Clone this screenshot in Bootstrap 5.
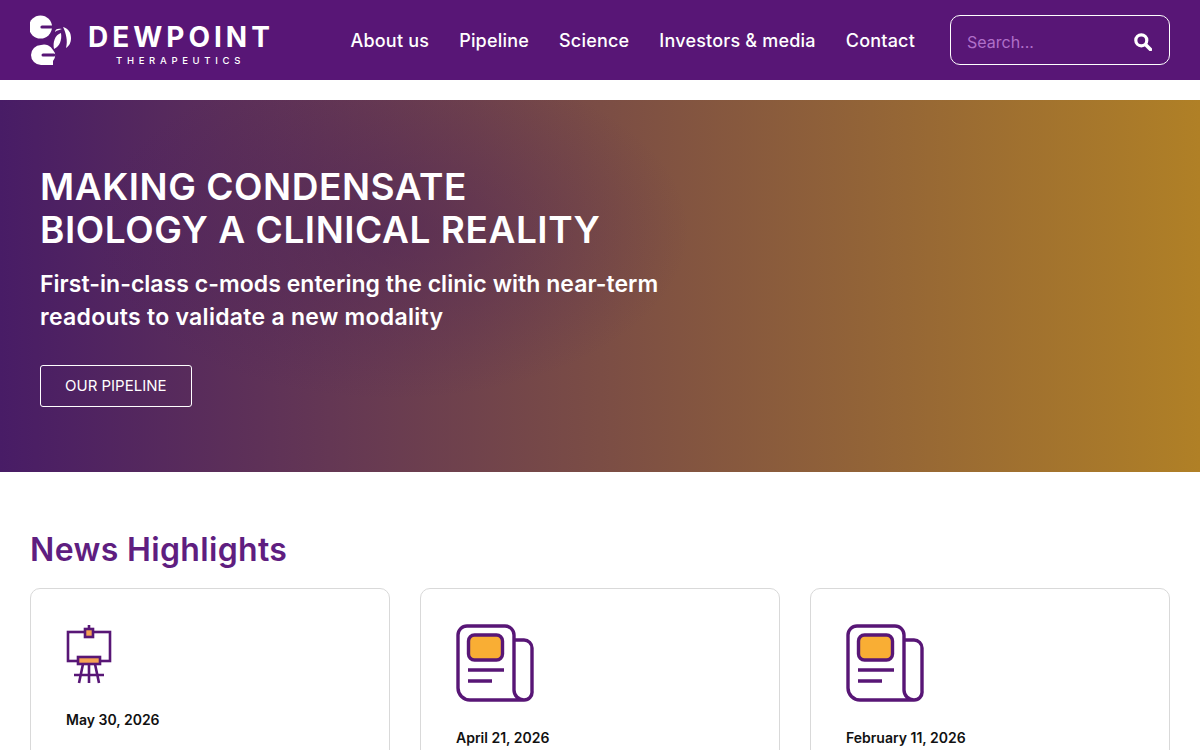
<!doctype html>
<html lang="en"><head><meta charset="utf-8"><title>Dewpoint Therapeutics</title>
<link href="https://cdn.jsdelivr.net/npm/bootstrap@5.3.0/dist/css/bootstrap.min.css" rel="stylesheet">
<style>
html,body{height:750px;overflow:hidden}
body{font-family:Inter,"Liberation Sans",sans-serif;color:#111;background:#fff}
.topbar{background:#581676;height:80px;padding:0 30px}
.brand-lockup{width:182px;margin-left:17px;padding-top:8px}
.brand-word{color:#fff;font-size:28px;font-weight:700;letter-spacing:4px;line-height:28px;white-space:nowrap}
.brand-sub{color:#fff;font-size:9.5px;font-weight:500;letter-spacing:4.7px;line-height:10px;white-space:nowrap;margin-top:5px;padding-left:28px}
.menu-link{color:#fff;font-size:18px;font-weight:500;letter-spacing:.2px;text-decoration:none;white-space:nowrap}
.menu-gap{gap:30px;margin-right:35px}
.search-box{width:220px;height:50px;border:1px solid #fff;border-radius:10px;padding:4px 17px 0 16px}
.search-box input{background:none;border:0;outline:0;flex:1;min-width:0;padding:0;color:#fff;font-size:16px}
.search-box input::placeholder{color:#b06fc9;opacity:1}
.hero{margin-top:20px;height:372px;padding:65px 40px 0;color:#fff;background:radial-gradient(ellipse 300px 170px at 390px 130px,rgba(70,28,90,.42),rgba(70,28,90,0)),linear-gradient(90deg,#481c66 0%,#7b4d45 50%,#b08026 100%)}
.hero h1{font-size:37px;font-weight:600;letter-spacing:.55px;line-height:43px;margin:0 0 17px}
.hero-lead{font-size:23px;font-weight:600;letter-spacing:.04px;line-height:33px;margin:0 0 31px}
.lead-tail{letter-spacing:.28px}
.hero-btn{display:inline-block;border:1px solid #fff;border-radius:3px;color:#fff;font-size:15px;height:42px;line-height:40px;padding:0 24px;text-decoration:none}
.news{padding:60px 30px 0}
.news h2{color:#5f1e80;font-size:32px;font-weight:600;letter-spacing:.35px;line-height:36px;margin:0 0 20px}
.news-card{border:1px solid #d9d9d9;border-radius:10px;height:400px;padding:35px}
.news-grid{--bs-gutter-x:30px}
.news-date{font-size:14px;font-weight:600;margin-top:26px;line-height:20px;color:#111}
</style></head><body>
<nav class="topbar d-flex align-items-center justify-content-between">
 <a href="#" class="d-flex align-items-center text-decoration-none" aria-label="Dewpoint Therapeutics">
  <svg width="41" height="50" viewBox="0 0 41 50" aria-hidden="true">
   <circle cx="10.500" cy="12" r="11.500" fill="#fff"/>
   <path d="M12 12h10" stroke="#581676" stroke-width="3.200" stroke-linecap="round"/>
   <path d="M11 30a10 10 0 0 0 0 20h12v-4a8 8 0 0 0 0-11a10 10 0 0 0-12-5Z" fill="#fff"/>
   <path d="M13 40h11" stroke="#581676" stroke-width="3" stroke-linecap="round"/>
   <path d="M24 34c-1.500-7 1-14 7-16 1 7-1 13-7 16Z" fill="#fff"/>
   <path d="M33 12c6 2 8 6 8 11s-2 8-5 10c2-7 0-15-3-21Z" fill="#fff"/>
   <path d="M25 17c0-3 3-4 7-3-2 1-5 1-7 3Z" fill="#fff"/>
  </svg>
  <div class="brand-lockup">
   <div class="brand-word">DEWPOINT</div>
   <div class="brand-sub">THERAPEUTICS</div>
  </div>
 </a>
 <div class="d-flex align-items-center menu-gap ms-auto">
  <a class="menu-link" href="#">About us</a><a class="menu-link" href="#">Pipeline</a><a class="menu-link" href="#">Science</a><a class="menu-link" href="#">Investors &amp; media</a><a class="menu-link" href="#">Contact</a>
 </div>
 <div class="search-box d-flex align-items-center">
  <input type="text" placeholder="Search..." aria-label="Search">
  <svg width="18" height="18" viewBox="0 0 18 18" fill="none" stroke="#fff" aria-hidden="true"><circle cx="7.300" cy="7.300" r="5.500" stroke-width="3.200"/><path d="m12 12 4.500 4.500" stroke-width="3.600" stroke-linecap="round"/></svg>
 </div>
</nav>
<section class="hero">
 <h1>MAKING CONDENSATE<br>BIOLOGY A CLINICAL REALITY</h1>
 <p class="hero-lead">First-in-class c-mods entering the clinic with near-term<br><span class="lead-tail">readouts to validate a new modality</span></p>
 <a class="hero-btn" href="#">OUR PIPELINE</a>
</section>
<section class="news">
 <h2>News Highlights</h2>
 <div class="row news-grid">
  <div class="col-4"><div class="news-card">
   <svg width="46" height="60" viewBox="0 0 46 60" fill="none" stroke="#581676" stroke-width="2.600" aria-hidden="true"><path d="M23 1v4"/><rect x="2" y="8" width="42" height="29"/><rect x="19" y="5" width="8" height="8" fill="#f5a253"/><rect x="12" y="33" width="22" height="7" fill="#f5a253"/><path d="M17 40l-4 19M23 40v19M29 40l4 19M8 51h30"/></svg>
   <div class="news-date">May 30, 2026</div>
  </div></div>
  <div class="col-4"><div class="news-card">
   <svg width="78" height="78" viewBox="0 0 78 78" fill="none" stroke="#581676" stroke-width="3.400" aria-hidden="true"><path d="M68 76H14A12 12 0 0 1 2 64V11a9 9 0 0 1 9-9H49a9 9 0 0 1 9 9v55a10 10 0 0 0 10 10a8 8 0 0 0 8-9V24a8 8 0 0 0-8-8H58"/><rect x="12.500" y="11" width="34" height="25" rx="6" fill="#f9ae34"/><path d="M12 46h36M12 57h24"/></svg>
   <div class="news-date">April 21, 2026</div>
  </div></div>
  <div class="col-4"><div class="news-card">
   <svg width="78" height="78" viewBox="0 0 78 78" fill="none" stroke="#581676" stroke-width="3.400" aria-hidden="true"><path d="M68 76H14A12 12 0 0 1 2 64V11a9 9 0 0 1 9-9H49a9 9 0 0 1 9 9v55a10 10 0 0 0 10 10a8 8 0 0 0 8-9V24a8 8 0 0 0-8-8H58"/><rect x="12.500" y="11" width="34" height="25" rx="6" fill="#f9ae34"/><path d="M12 46h36M12 57h24"/></svg>
   <div class="news-date">February 11, 2026</div>
  </div></div>
 </div>
</section>
<script src="https://cdn.jsdelivr.net/npm/bootstrap@5.3.0/dist/js/bootstrap.bundle.min.js"></script>
</body></html>
